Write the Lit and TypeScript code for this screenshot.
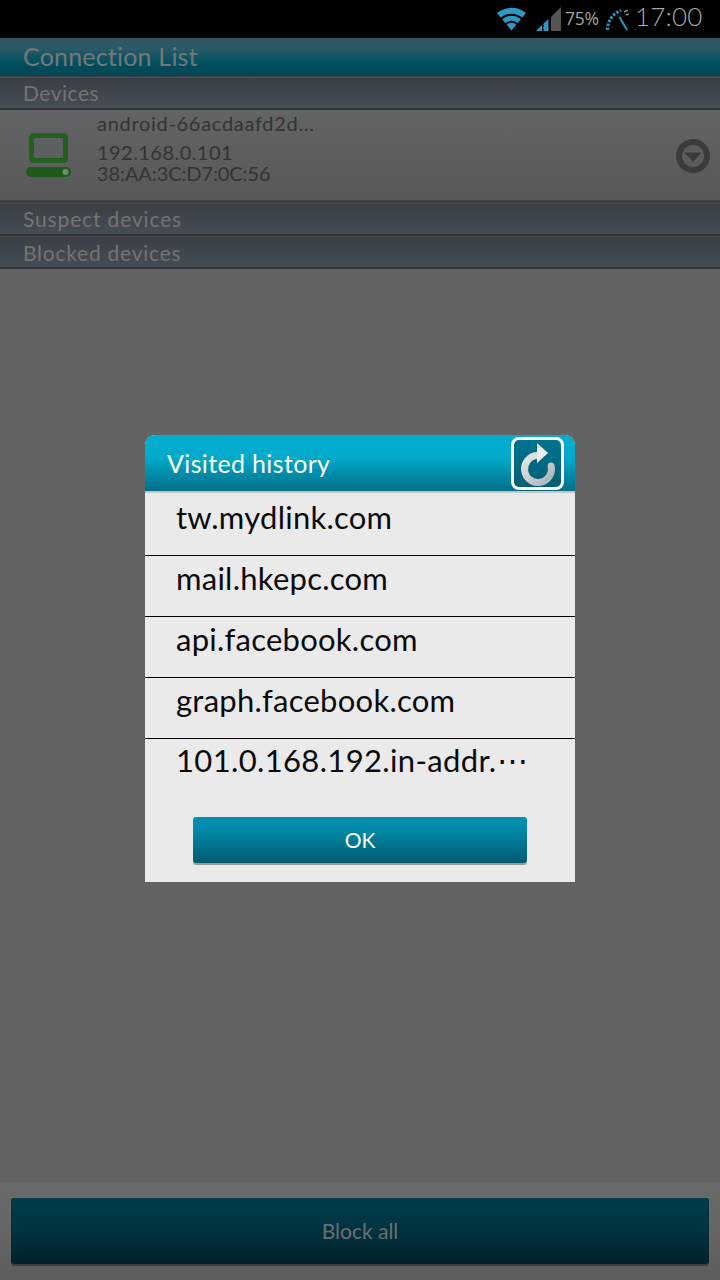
import { LitElement, html, css } from "lit";
import { customElement } from "lit/decorators.js";

@customElement("app-root")
export class AppRoot extends LitElement {
  static styles = css`
    :host { display: block; width: 720px; height: 1280px; position: relative; overflow: hidden; background: #666; font-family: "Lato", "Noto Sans", sans-serif; }
    .page { display: flex; flex-direction: column; height: 1280px; }
    .status { height: 38px; background: #000; display: flex; align-items: flex-start; padding-left: 497px; box-sizing: border-box; flex: none; }
    .status svg { display: block; flex: none; margin-top: 7px; }
    .wifi { margin-right: 10px; }
    .signal { margin-right: 4px; }
    .pct { font-size: 17.5px; color: #a4a4a4; width: 41px; font-family: "Open Sans", sans-serif; letter-spacing: -0.3px; line-height: 36px; }
    .gauge { margin-right: 6px; }
    .clock { font-size: 26px; color: #a8a8a8; font-family: "Lato", sans-serif; font-weight: 300; line-height: 33px; letter-spacing: 0.2px; }
    .title { height: 39px; flex: none; box-sizing: border-box; padding-left: 23px; background: linear-gradient(#31565f 0%, #285a66 30%, #00505f 65%, #044452 100%); color: #777; font-size: 25px; line-height: 37px; letter-spacing: 0.2px; border-bottom: 1px solid #3a4148; }
    .sec { flex: none; box-sizing: border-box; padding-left: 23px; background: linear-gradient(#3a3f45, #454d55); color: #747474; font-size: 21px; border-top: 1px solid #4e4e4e; border-bottom: 2px solid #30343a; letter-spacing: 0.5px; }
    .s1 { height: 33px; line-height: 30px; }
    .s2 { height: 33px; line-height: 30px; letter-spacing: 0.85px; }
    .s3 { height: 33px; line-height: 32px; letter-spacing: 0.75px; }
    .device { height: 93px; flex: none; box-sizing: border-box; display: flex; align-items: center; background: linear-gradient(#636466, #585858); border-bottom: 3px solid #3c3f44; }
    .pc { margin-left: 26px; margin-right: 26px; flex: none; }
    .info { flex: 1; color: #333; font-size: 20px; letter-spacing: 0.7px; line-height: 21px; padding-bottom: 13px; }
    .name { margin-bottom: 8px; }
    .ip { letter-spacing: 0.45px; }
    .mac { letter-spacing: -0.1px; }
    .arrow { margin: 2px 10px 0 0; flex: none; }
    .fill { flex: 1; background: #636363; }
    .footer { height: 98px; flex: none; box-sizing: border-box; padding: 16px 11px 16px; background: linear-gradient(#6a6a6a 0%, #666 50%, #5d5d5d 100%); }
    .blockall { height: 66px; border-radius: 3px; background: linear-gradient(#013a48 10%, #00323f 50%, #012229 100%); box-shadow: 0 2px 0 #3f3f3f; color: #6e6e6e; font-size: 21px; display: flex; align-items: center; justify-content: center; padding-bottom: 2px; box-sizing: border-box; }
    .overlay { position: absolute; left: 0; right: 0; top: 38px; bottom: 0; padding-bottom: 1px; display: flex; align-items: center; justify-content: center; }
    .dialog { width: 430px; background: #eaeaea; border-radius: 10px 10px 0 0; }
    .head { height: 56px; box-sizing: border-box; border-radius: 10px 10px 0 0; background: linear-gradient(#02aed0 0%, #02aacb 40%, #006f88 100%); display: flex; align-items: center; justify-content: space-between; padding: 0 11px 0 22px; color: #fff; font-size: 25px; letter-spacing: 0.35px; }
    .refresh { width: 53px; height: 53px; box-sizing: border-box; border: 3px solid #fff; border-radius: 8px; background: linear-gradient(#00738f, #005f75); }
    .refresh svg { display: block; }
    .rule { height: 2px; background: #c6c6c6; }
    .row { height: 61px; box-sizing: border-box; padding: 1px 30px 0 31px; border-bottom: 1px solid #000; color: #0a0a0a; font-size: 31px; line-height: 42px; letter-spacing: 0.25px; white-space: nowrap; overflow: hidden; }
    .row.first { height: 63px; padding-top: 3px; }
    .row.last { height: 78px; border-bottom: 0; padding-top: 0; letter-spacing: 0.35px; }
    .actions { padding: 0 48px 19px; }
    .ok { height: 46px; border-radius: 3px; background: linear-gradient(#018eaf 0%, #018aa9 25%, #005b70 100%); box-shadow: 0 2px 0 #9a9a9a; color: #fff; font-size: 21px; display: flex; align-items: center; justify-content: center; padding-bottom: 2px; box-sizing: border-box; }
  `;

  render() {
    const rows = ["tw.mydlink.com", "mail.hkepc.com", "api.facebook.com", "graph.facebook.com"];
    return html`
      <div class="page">
        <div class="status">
          <svg class="wifi" width="29" height="24" viewBox="0 0 29 24">
            <path d="M14.5 23.5 L0 6 A23 23 0 0 1 29 6 Z" fill="#2f97c4"/>
            <path d="M8.4 17.4 A8.5 8.5 0 0 1 20.6 17.4 M3.8 12 A15.5 15.5 0 0 1 25.2 12" fill="none" stroke="#000" stroke-width="2"/>
          </svg>
          <svg class="signal" width="25" height="24" viewBox="0 0 25 24">
            <path d="M25 0 V24 H15 V10 Z" fill="#555"/>
            <path d="M0 24 L6 18 V24 Z" fill="#2f97c4"/>
            <path d="M7.5 16.5 L12.5 12 V24 H7.5 Z" fill="#2f97c4"/>
          </svg>
          <span class="pct">75%</span>
          <svg class="gauge" width="23" height="24" viewBox="0 0 23 24">
            <path d="M1.5 23 A20 20 0 0 1 15 3.5" fill="none" stroke="#2f97c4" stroke-width="3" stroke-dasharray="2.5 1.5"/>
            <path d="M13.5 10 L21 23" stroke="#2f97c4" stroke-width="2"/>
            <path d="M18 5 L22 3 M20 8 L23 7" stroke="#888" stroke-width="1.5"/>
          </svg>
          <span class="clock">17:00</span>
        </div>
        <div class="title">Connection List</div>
        <div class="sec s1">Devices</div>
        <div class="device">
          <svg class="pc" width="45" height="44" viewBox="0 0 45 44">
            <rect x="5.5" y="2.5" width="34" height="25" rx="2" fill="none" stroke="#236020" stroke-width="5"/>
            <rect x="0" y="34" width="45" height="10" rx="5" fill="#1f5a1c"/>
            <circle cx="39.5" cy="39" r="3" fill="#6f8f6c"/>
          </svg>
          <div class="info">
            <div class="name">android-66acdaafd2d...</div>
            <div class="ip">192.168.0.101</div>
            <div class="mac">38:AA:3C:D7:0C:56</div>
          </div>
          <svg class="arrow" width="34" height="34" viewBox="0 0 34 34">
            <circle cx="17" cy="17" r="14" fill="#5c5c5c" stroke="#3b3b3b" stroke-width="6"/>
            <path d="M8.5 13.5 H25.5 L17 23 Z" fill="#3a3a3a"/>
          </svg>
        </div>
        <div class="sec s2">Suspect devices</div>
        <div class="sec s3">Blocked devices</div>
        <div class="fill"></div>
        <div class="footer"><div class="blockall">Block all</div></div>
      </div>
      <div class="overlay">
        <div class="dialog">
          <div class="head">
            <span>Visited history</span>
            <div class="refresh">
              <svg width="47" height="47" viewBox="0 0 47 47">
                <defs>
                  <linearGradient id="ring" x1="0" y1="0" x2="1" y2="1">
                    <stop offset="0" stop-color="#e8e8e8"/>
                    <stop offset="1" stop-color="#a8b4b8"/>
                  </linearGradient>
                </defs>
                <path d="M23 15.5 A13.5 13.5 0 1 0 37.2 26" fill="none" stroke="url(#ring)" stroke-width="7" stroke-linecap="round"/>
                <path d="M23 3 L34 13 L23 23 Z" fill="#eeeeee"/>
              </svg>
            </div>
          </div>
          <div class="rule"></div>
          ${rows.map((r, i) => html`<div class="row ${i === 0 ? "first" : ""}">${r}</div>`)}
          <div class="row last">101.0.168.192.in-addr.⋯</div>
          <div class="actions"><div class="ok">OK</div></div>
        </div>
      </div>
    `;
  }
}
